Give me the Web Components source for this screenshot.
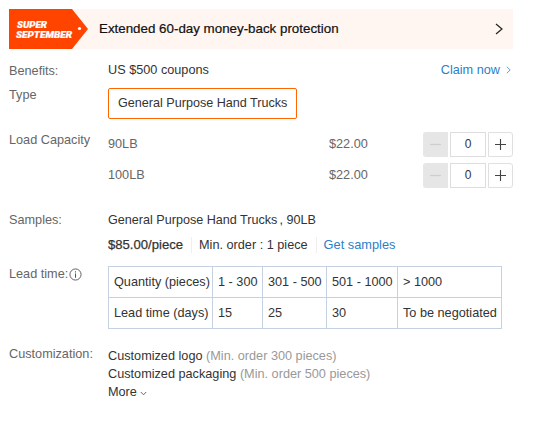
<!DOCTYPE html>
<html>
<head>
<meta charset="utf-8">
<title>Product options</title>
<style>
  html, body { margin: 0; background: #fff; }
  body { padding: 9px 36px 0 9px; font: 12.7px/18px "Liberation Sans", Arial, sans-serif; color: #333; }
</style>
</head>
<body>
<promo-banner>Extended 60-day money-back protection</promo-banner>

<spec-row label="Benefits:" style="margin-top:12px" label-top="1">
  <benefit-line></benefit-line>
</spec-row>

<spec-row label="Type" style="margin-top:9px" label-top="-2">
  <option-button>General Purpose Hand Trucks</option-button>
</spec-row>

<spec-row label="Load Capacity" style="margin-top:13px" label-top="-1">
  <capacity-row name="90LB" price="$22.00"></capacity-row>
  <capacity-row name="100LB" price="$22.00" style="margin-top:6px"></capacity-row>
</spec-row>

<spec-row label="Samples:" style="margin-top:23px">
  <sample-info></sample-info>
</spec-row>

<spec-row label="Lead time:" info style="margin-top:12px" label-top="-1">
  <lead-table></lead-table>
</spec-row>

<spec-row label="Customization:" style="margin-top:18px" label-top="-2">
  <custom-list></custom-list>
</spec-row>

<script>
function make(name, html) {
  customElements.define(name, class extends HTMLElement {
    constructor() {
      super();
      this.attachShadow({ mode: "open" }).innerHTML = html(this);
    }
  });
}

make("promo-banner", () => `
  <style>
    :host { display: flex; align-items: center; height: 40px; background: #fff5f1; color: #111; }
    .tag { width: 80px; height: 40px; flex: none; }
    .txt { flex: 1; margin-left: 10px; font-size: 13.35px; -webkit-text-stroke: .2px #111; }
    svg.go { width: 8px; height: 12px; margin-right: 10px; }
  </style>
  <svg class="tag" viewBox="0 0 80 40">
    <path d="M0 0H63L79 20L63 40H0Z" fill="#ff4400"/>
    <circle cx="70.5" cy="19.5" r="1.6" fill="#fff"/>
    <text x="8" y="19" font-family="Roboto, sans-serif" font-size="8.8" font-weight="900" font-style="italic" fill="#fff" stroke="#fff" stroke-width=".2" textLength="30" lengthAdjust="spacingAndGlyphs">SUPER</text>
    <text x="7" y="28.5" font-family="Roboto, sans-serif" font-size="8.8" font-weight="900" font-style="italic" fill="#fff" stroke="#fff" stroke-width=".2" textLength="56" lengthAdjust="spacingAndGlyphs">SEPTEMBER</text>
  </svg>
  <span class="txt"><slot></slot></span>
  <svg class="go" viewBox="0 0 8 12"><path d="M1 1L7 6L1 11" fill="none" stroke="#222" stroke-width="1.2"/></svg>
`);

make("spec-row", (el) => `
  <style>
    :host { display: flex; }
    .label { width: 99px; height: 0; flex: none; color: #666; display: flex; align-items: flex-start; gap: 1px; }
    .info { width: 13px; height: 13px; margin-top: 3px; }
    .body { flex: 1; min-width: 0; }
  </style>
  <div class="label" style="margin-top:${el.getAttribute("label-top") || 0}px">
    <span>${el.getAttribute("label")}</span>
    ${el.hasAttribute("info") ? `<svg class="info" viewBox="0 0 14 14"><circle cx="7" cy="7" r="6" fill="none" stroke="#555"/><path d="M7 6v4.5M7 3.5v1.4" stroke="#555" stroke-width="1.1" fill="none"/></svg>` : ""}
  </div>
  <div class="body"><slot></slot></div>
`);

make("benefit-line", () => `
  <style>
    :host { display: flex; justify-content: space-between; align-items: center; padding-right: 2px; }
    a { color: #2a7fc9; text-decoration: none; display: flex; align-items: center; gap: 6px; }
    svg { width: 5px; height: 8px; }
  </style>
  <span>US $500 coupons</span>
  <a href="#">Claim now<svg viewBox="0 0 5 8"><path d="M.8 .8L4.2 4L.8 7.2" fill="none" stroke="#6a9bd0"/></svg></a>
`);

make("option-button", () => `
  <style>
    :host { display: inline-block; box-sizing: border-box; height: 31px; padding: 0 9px; font-size: 12.6px; line-height: 29px; border: 1px solid #ff6600; border-radius: 2px; }
  </style>
  <slot></slot>
`);

make("capacity-row", (el) => `
  <style>
    :host { display: flex; align-items: center; height: 25px; color: #666; }
    .name { width: 221px; margin-bottom: 2px; }
    .price { flex: 1; margin-bottom: 2px; }
  </style>
  <span class="name">${el.getAttribute("name")}</span>
  <span class="price">${el.getAttribute("price")}</span>
  <qty-stepper></qty-stepper>
`);

make("qty-stepper", () => `
  <style>
    :host { display: flex; gap: 2px; height: 25px; }
    .btn { width: 25px; box-sizing: border-box; display: flex; align-items: center; justify-content: center; }
    .minus { background: #e6e6e6; border-radius: 3px 0 0 3px; }
    .plus { border: 1px solid #e0e0e0; border-radius: 0 3px 3px 0; }
    .val { width: 36px; box-sizing: border-box; border: 1px solid #ddd; text-align: center; line-height: 23px; font-size: 12px; color: #333; }
    svg { width: 13px; height: 13px; }
  </style>
  <span class="btn minus"><svg viewBox="0 0 13 13"><path d="M1 6.5H12" stroke="#cfcfcf" stroke-width="1.4"/></svg></span>
  <span class="val">0</span>
  <span class="btn plus"><svg viewBox="0 0 13 13"><path d="M1 6.5H12M6.5 1V12" stroke="#444" stroke-width="1.1"/></svg></span>
`);

make("sample-info", () => `
  <style>
    :host { display: block; }
    .line1 { font-size: 12.6px; }
    .line2 { display: flex; align-items: center; margin-top: 7px; }
    b { font-weight: 400; font-size: 13.1px; -webkit-text-stroke: .25px #333; }
    .sep { width: 1px; height: 16px; background: #eee; margin: 0 7px 0 8px; }
    a { color: #2a7fc9; text-decoration: none; font-size: 12.8px; }
    .tail { margin-left: 2px; }
  </style>
  <div class="line1">General Purpose Hand Trucks<span class="tail">, 90LB</span></div>
  <div class="line2"><b>$85.00/piece</b><i class="sep"></i><span>Min. order : 1 piece</span><i class="sep"></i><a href="#">Get samples</a></div>
`);

make("lead-table", () => `
  <style>
    :host { display: block; }
    table { border-collapse: collapse; table-layout: fixed; width: 393px; }
    td { border: 1px solid #c5d0e0; height: 31px; padding: 0 0 0 5px; box-sizing: border-box; white-space: nowrap; }
  </style>
  <table>
    <colgroup><col style="width:104px"><col style="width:50px"><col style="width:64px"><col style="width:71px"><col style="width:104px"></colgroup>
    <tr><td>Quantity (pieces)</td><td>1 - 300</td><td>301 - 500</td><td>501 - 1000</td><td>&gt; 1000</td></tr>
    <tr><td>Lead time (days)</td><td>15</td><td>25</td><td>30</td><td>To be negotiated</td></tr>
  </table>
`);

make("custom-list", () => `
  <style>
    :host { display: block; }
    i { font-style: normal; color: #999; }
    svg { width: 7px; height: 5px; }
  </style>
  <div>Customized logo <i>(Min. order 300 pieces)</i></div>
  <div>Customized packaging <i>(Min. order 500 pieces)</i></div>
  <div>More <svg viewBox="0 0 7 5"><path d="M.8 1L3.5 3.8L6.2 1" fill="none" stroke="#666"/></svg></div>
`);
</script>
</body>
</html>
